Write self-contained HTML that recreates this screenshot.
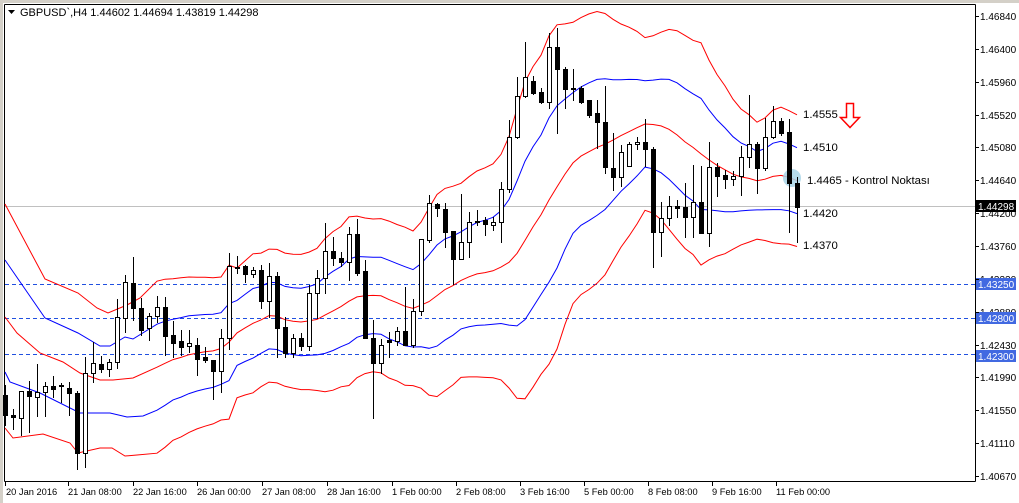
<!DOCTYPE html>
<html><head><meta charset="utf-8"><style>
html,body{margin:0;padding:0;background:#fff;}
body{width:1019px;height:503px;overflow:hidden;position:relative;font-family:"Liberation Sans",Tahoma,sans-serif;}
svg{position:absolute;left:0;top:0;}
</style></head><body>
<svg id="s" width="1019" height="503" xmlns="http://www.w3.org/2000/svg" font-family="Liberation Sans, sans-serif">
<rect x="0" y="0" width="1019" height="503" fill="#fff"/>
<rect x="0" y="0" width="1019" height="3" fill="#d4d0c8"/>
<rect x="0" y="0" width="3" height="503" fill="#d4d0c8"/>
<line x1="4.5" y1="4.5" x2="975.5" y2="4.5" stroke="#000"/>
<line x1="4.5" y1="4.5" x2="4.5" y2="481.5" stroke="#000"/>
<line x1="975.5" y1="4.5" x2="975.5" y2="481.5" stroke="#000"/>
<line x1="4.5" y1="481.5" x2="975.5" y2="481.5" stroke="#000"/>
<line x1="5" y1="206.5" x2="975" y2="206.5" stroke="#c0c0c0"/>
<g stroke="#2050e0" stroke-dasharray="4,3">
<line x1="5" y1="284.5" x2="975" y2="284.5"/>
<line x1="5" y1="318.5" x2="975" y2="318.5"/>
<line x1="5" y1="354.5" x2="975" y2="354.5"/>
</g>
<g id="bands" fill="none"></g>
<circle cx="792" cy="178" r="9" fill="#a8d4e6" opacity="0.85"/>
<g id="candles"></g>
<path d="M846.5 103.5 H853.5 V117.5 H859.5 L850 127.5 L840.5 117.5 H846.5 Z" fill="#fff" stroke="#ff0000" stroke-width="1.5"/>
<g font-size="11.4" fill="#000">
<text x="803" y="118">1.4555</text>
<text x="803" y="151">1.4510</text>
<text x="807" y="184">1.4465 - Kontrol Noktası</text>
<text x="803" y="217">1.4420</text>
<text x="803" y="249">1.4370</text>
</g>
<path d="M8 10 h7 l-3.5 4z" fill="#000"/>
<text x="20" y="16" font-size="11" fill="#000">GBPUSD`,H4  1.44602 1.44694 1.43819 1.44298</text>
<g id="axis" font-size="10" fill="#000"></g>
<rect x="976" y="200" width="40" height="12" fill="#000"/>
<text x="978" y="210" font-size="10" fill="#fff">1.44298</text>
<rect x="976" y="278" width="40" height="12" fill="#4169e1"/>
<text x="978" y="288" font-size="10" fill="#fff">1.43250</text>
<rect x="976" y="312" width="40" height="12" fill="#4169e1"/>
<text x="978" y="322" font-size="10" fill="#fff">1.42800</text>
<rect x="976" y="350" width="40" height="12" fill="#4169e1"/>
<text x="978" y="360" font-size="10" fill="#fff">1.42300</text>
<g font-size="9.3" fill="#000">
<text x="6" y="495">20 Jan 2016</text>
<text x="68" y="495">21 Jan 08:00</text>
<text x="133" y="495">22 Jan 16:00</text>
<text x="197" y="495">26 Jan 00:00</text>
<text x="262" y="495">27 Jan 08:00</text>
<text x="327" y="495">28 Jan 16:00</text>
<text x="392" y="495">1 Feb 00:00</text>
<text x="456" y="495">2 Feb 08:00</text>
<text x="520" y="495">3 Feb 16:00</text>
<text x="584" y="495">5 Feb 00:00</text>
<text x="648" y="495">8 Feb 08:00</text>
<text x="712" y="495">9 Feb 16:00</text>
<text x="776" y="495">11 Feb 00:00</text>
</g>
<g id="ticks" stroke="#000"></g>
</svg>
<script>
var D=[[395,415,385,425,0],[415,417,409,429,0],[391,418,391,435,1],[391,396,381,432,0],[392,397,364,416,1],[386,392,382,416,1],[386,389,376,397,0],[385,386,383,402,1],[388,393,382,415,0],[393,453,391,469,0],
[373,453,357,467,1],[363,373,342,382,1],[364,369,356,372,0],[362,369,359,376,1],[317,362,299,368,1],[282,318,275,332,1],[283,308,257,320,0],[308,330,298,335,0],[316,328,313,340,1],[307,316,296,322,1],
[307,336,297,355,0],[335,343,321,357,0],[341,347,330,355,0],[343,346,330,352,1],[345,359,338,375,0],[357,360,347,362,0],[360,371,360,399,0],[338,371,329,392,1],[266,338,253,349,1],[267,268,256,273,0],
[266,274,265,282,0],[270,274,267,277,1],[270,301,265,308,0],[276,301,263,317,1],[276,328,272,357,0],[327,353,317,357,0],[338,353,334,357,1],[338,346,333,350,0],[293,346,285,350,1],[278,293,270,318,1],
[251,278,223,293,1],[251,258,237,265,0],[258,262,252,266,0],[234,262,227,280,1],[234,273,219,275,0],[271,338,260,338,0],[338,363,320,418,0],[345,363,339,373,1],[340,342,332,357,0],[331,341,327,345,1],
[331,345,287,345,0],[311,345,299,347,1],[239,311,239,315,1],[203,240,195,242,1],[204,208,203,216,0],[209,232,203,247,0],[231,259,231,284,0],[242,259,194,259,1],[222,242,212,257,1],[221,222,210,225,1],
[220,224,217,235,0],[222,225,217,230,1],[189,222,182,242,1],[137,189,120,192,1],[96,137,77,138,1],[77,96,42,97,1],[81,93,76,94,0],[92,102,88,103,0],[47,102,33,108,1],[47,69,28,133,0],
[69,89,67,108,0],[88,89,69,100,1],[88,102,86,103,0],[100,115,100,117,0],[113,122,100,148,0],[122,167,86,173,0],[168,177,133,190,0],[152,177,145,186,1],[144,166,142,166,1],[142,144,137,149,1],
[142,149,119,166,0],[149,232,147,267,0],[218,232,202,256,1],[206,218,196,225,1],[206,208,200,217,0],[207,217,183,237,0],[202,217,165,237,1],[202,233,166,233,0],[167,233,142,246,1],[167,176,163,196,0],
[175,179,170,188,0],[176,179,171,185,1],[157,176,146,195,1],[144,157,95,167,1],[144,168,142,193,0],[137,168,118,170,1],[121,137,106,138,1],[121,133,118,135,0],[132,183,119,232,0],[183,207,177,242,0]];
var NS="http://www.w3.org/2000/svg";
function el(t,a,p){var e=document.createElementNS(NS,t);for(var k in a)e.setAttribute(k,a[k]);p.appendChild(e);return e;}
var cg=document.getElementById('candles');
var closes=[];
D.forEach(function(d,i){var x=5+8*i;var top=d[0],bot=d[1],w=d[4];closes.push(w?top:bot);
el('line',{x1:x+.5,y1:d[2],x2:x+.5,y2:d[3]+1,stroke:'#000'},cg);
var h=Math.max(bot-top,1);
el('rect',{x:x-1.5,y:top+.5,width:4,height:h,fill:w?'#fff':'#000',stroke:'#000'},cg);});
var man={
ur:[[5,204],[45,279],[78,293],[97,308],[108,313],[127,305],[140,298],[157,283]],
ub:[[5,260],[45,318],[78,333],[100,346],[110,346],[125,337],[133,339],[157,325]],
m:[[5,317],[17,333],[40,353],[63,362],[80,373],[100,380],[113,380],[133,378],[157,367]],
lb:[[5,372],[10,382],[40,393],[80,413],[110,413],[127,417],[143,416],[157,410]],
lr:[[5,428],[13,438],[43,434],[70,443],[78,453],[100,448],[112,448],[125,456],[137,455],[157,453]]};
var comp={ur:[],ub:[],m:[],lb:[],lr:[]};
for(var i=19;i<D.length;i++){var s=0,q=0;for(var j=i-19;j<=i;j++){s+=closes[j];}var m=s/20;for(j=i-19;j<=i;j++){q+=(closes[j]-m)*(closes[j]-m);}var sd=Math.sqrt(q/20);var x=5+8*i;
comp.m.push([x,m]);comp.ub.push([x,m-sd]);comp.lb.push([x,m+sd]);comp.ur.push([x,m-2*sd]);comp.lr.push([x,m+2*sd]);}
var bg=document.getElementById('bands');
['ur','ub','m','lb','lr'].forEach(function(k){var pts=man[k].slice(0,-1).concat(comp[k]);
el('polyline',{points:pts.map(function(p){return p[0]+','+p[1].toFixed(1)}).join(' '),stroke:(k=='ub'||k=='lb')?'#0000ff':'#ff0000','stroke-width':1},bg);});
var ag=document.getElementById('axis'),tg=document.getElementById('ticks');
var labs=['1.46840','1.46400','1.45960','1.45520','1.45080','1.44640','1.44200','1.43760','1.43320','1.42880','1.42430','1.41990','1.41550','1.41110','1.40670'];
labs.forEach(function(l,i){var y=Math.round(16+i*32.86);el('line',{x1:975,y1:y+.5,x2:979,y2:y+.5},tg);var t=el('text',{x:980,y:y+4},ag);t.textContent=l;});
[5,68,133,197,262,327,392,456,520,584,648,712,776].forEach(function(x){el('line',{x1:x+.5,y1:481,x2:x+.5,y2:486},tg);});
</script>
</body></html>
